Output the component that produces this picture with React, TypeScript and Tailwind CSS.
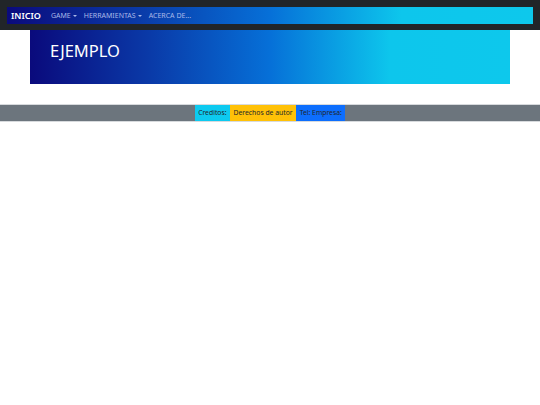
const navLinks = [
  { label: "GAME", caret: true },
  { label: "HERRAMIENTAS", caret: true },
  { label: "ACERCA DE...", caret: false },
]

const footerItems = [
  { label: "Creditos:", bg: "bg-[#0dcaf0]" },
  { label: "Derechos de autor", bg: "bg-[#ffc107]" },
  { label: "Tel: Empresa:", bg: "bg-[#0d6efd]" },
]

export default function App() {
  return (
    <div className="min-h-[405px] bg-white font-['Noto_Sans','Open_Sans',sans-serif]">
      <nav className="bg-[#212529] px-[7px] pt-[7px] pb-[6px]">
        <div className="flex h-[17px] items-center bg-[linear-gradient(to_right,#0a0a7c_0%,#0a3aa8_25%,#0670d8_50%,#0dc6ec_75%,#0dc8ec_100%)] pl-[4px] pr-2">
          <span className="text-[9px] font-semibold leading-none text-white">INICIO</span>
          <ul className="ml-[10px] flex items-center gap-[7px]">
            {navLinks.map((link) => (
              <li key={link.label} className="flex items-center text-[7px] leading-none text-[#a9b8e8]">
                {link.label}
                {link.caret && (
                  <span className="ml-[2px] inline-block border-x-[2px] border-t-[2px] border-x-transparent border-t-[#a9b8e8]" />
                )}
              </li>
            ))}
          </ul>
        </div>
      </nav>

      <header className="mx-[30px] flex h-[54px] items-center bg-[linear-gradient(to_right,#0a0a7c_0%,#0a3aa8_25%,#0670d8_50%,#0dc6ec_75%,#0dc8ec_100%)] pl-[20px] pb-[12px]">
        <h1 className="text-[16.5px] leading-none text-white">EJEMPLO</h1>
      </header>

      <footer className="mt-[20px] flex h-[18px] justify-center border-y border-[#d7dadd] bg-[#6c757d]">
        {footerItems.map((item) => (
          <div key={item.label} className={`${item.bg} flex items-center px-[3.5px] text-[6.8px] leading-none text-[#212529]`}>
            {item.label}
          </div>
        ))}
      </footer>
    </div>
  )
}
